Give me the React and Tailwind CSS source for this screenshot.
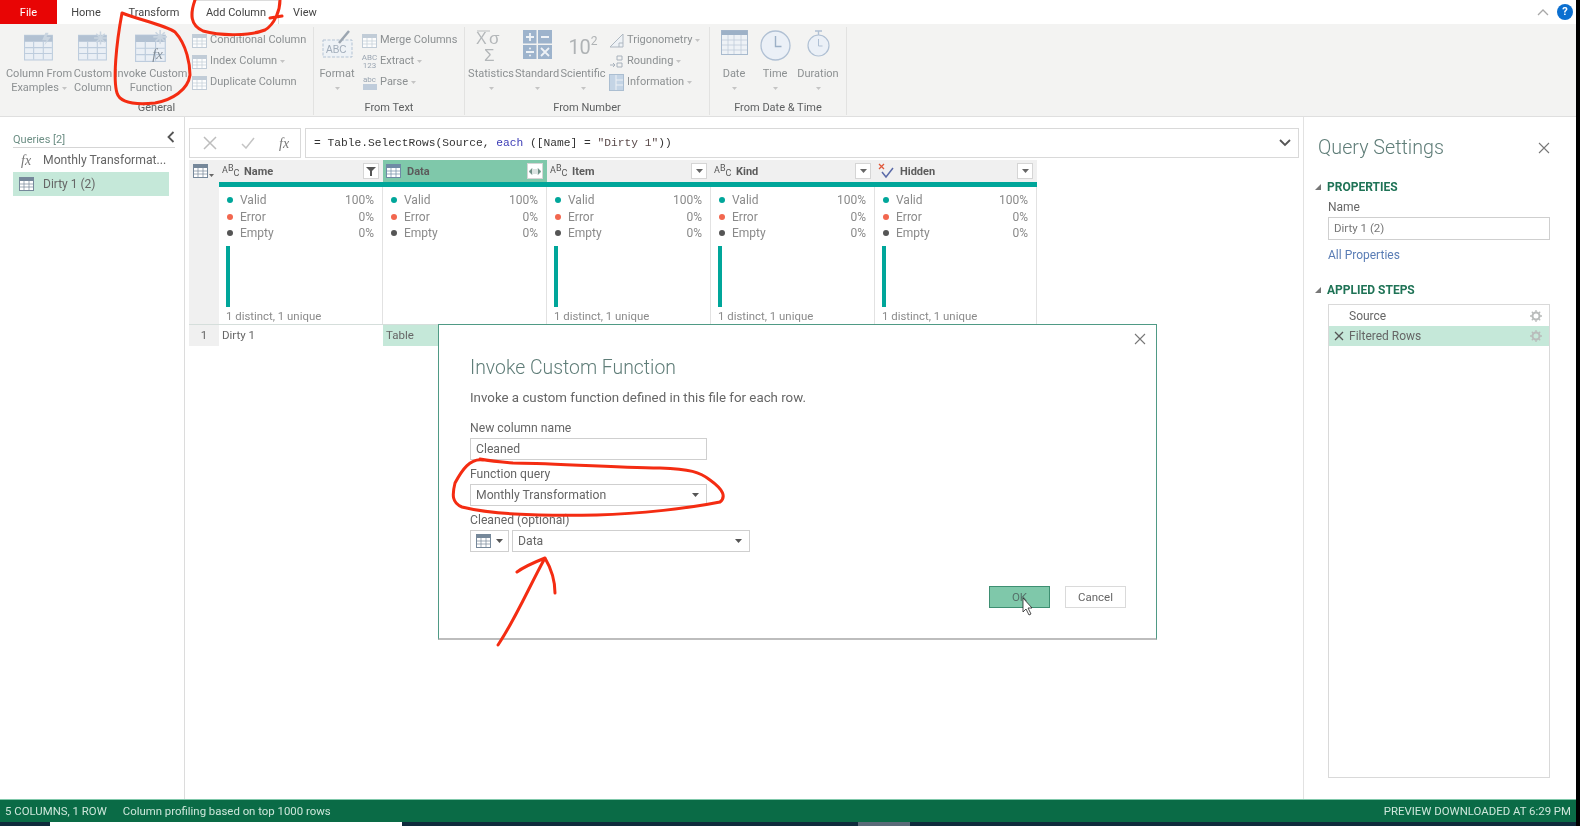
import React from 'react';

const Caret = ({ className = 'text-[#c4c4c4]', w = 7, h = 4 }) => (
  <svg width={w} height={h} viewBox="0 0 7 4" className={className}>
    <path d="M0 0h7L3.5 4z" fill="currentColor" />
  </svg>
);

const TableIcon = ({ w = 28, h = 28, extra }) => (
  <svg width={w} height={h} viewBox="0 0 28 28">
    <rect x="0.5" y="4.5" width="26" height="23" fill="#e9eff6" stroke="#b4c6da" />
    <rect x="0.5" y="4.5" width="26" height="6" fill="#a7b9cd" />
    <path d="M9 10v17M18 10v17M1 16h25M1 21.500h25" stroke="#b4c6da" fill="none" />
    {extra}
  </svg>
);

const TinyTable = ({ color = '#7d93ab' }) => (
  <svg width="15" height="14" viewBox="0 0 15 14">
    <rect x="0.5" y="0.5" width="14" height="13" fill="#fff" stroke={color} />
    <rect x="0.5" y="0.5" width="14" height="3.500" fill={color} />
    <path d="M5 4v9M10 4v9M1 7h13M1 10h13" stroke={color} strokeWidth="0.7" fill="none" />
  </svg>
);

const Burst = ({ x, y }) => (
  <path
    d={`M${x} ${y - 6}v12M${x - 6} ${y}h12M${x - 4} ${y - 4}l8 8M${x + 4} ${y - 4}l-8 8`}
    stroke="#c3d0dd"
    strokeWidth="1.400"
  />
);

const StatsIcon = () => (
  <svg width="30" height="36" viewBox="0 0 30 36">
    <path d="M1 1h13" stroke="#b0b3b5" />
    <text x="0" y="14" fontSize="16" fill="#a9adb0" fontFamily="Liberation Sans">X</text>
    <text x="13" y="14" fontSize="17" fill="#a9adb0" fontFamily="Liberation Sans">σ</text>
    <text x="8" y="31" fontSize="17" fill="#a9adb0" fontFamily="Liberation Sans">Σ</text>
  </svg>
);

const StandardIcon = () => (
  <svg width="29" height="29" viewBox="0 0 29 29">
    <rect width="13.500" height="13.500" fill="#8fa8c6" />
    <rect x="15" width="14" height="13.500" fill="#8fa8c6" />
    <rect y="15" width="13.500" height="14" fill="#8fa8c6" />
    <rect x="15" y="15" width="14" height="14" fill="#8fa8c6" />
    <path d="M3 7h8M7 3v8M18 7h8M3 22h8M18 18l8 8M26 18l-8 8" stroke="#eef2f7" strokeWidth="1.800" />
    <circle cx="7" cy="18.500" r="1" fill="#eef2f7" />
    <circle cx="7" cy="25.500" r="1" fill="#eef2f7" />
  </svg>
);

const ScientificIcon = () => (
  <div className="flex items-start pt-[2px] text-[#a4a8ab] text-[20px] leading-[30px]">
    10<span className="text-[12px] leading-[18px]">2</span>
  </div>
);

const CalendarIcon = () => (
  <svg width="27" height="25" viewBox="0 0 27 25">
    <rect x="0.5" y="0.5" width="26" height="24" fill="#eef2f7" stroke="#9cb1c8" />
    <rect x="0.5" y="0.5" width="26" height="4.500" fill="#8fa6c0" />
    <path d="M7 5v19M13 5v19M20 5v19M1 10h25M1 15h25M1 20h25" stroke="#b7c6d7" strokeWidth="0.800" fill="none" />
  </svg>
);

const ClockIcon = () => (
  <svg width="31" height="31" viewBox="0 0 31 31">
    <circle cx="15.500" cy="15.500" r="14.500" fill="#eaf0f8" stroke="#a5b8cf" strokeWidth="1.300" />
    <path d="M15.500 6v10.500h6" fill="none" stroke="#8ea5c0" strokeWidth="1.400" />
  </svg>
);

const StopwatchIcon = () => (
  <svg width="23" height="27" viewBox="0 0 23 27">
    <path d="M8 1h7M11.500 1v4" stroke="#a5b8cf" strokeWidth="1.400" />
    <circle cx="11.500" cy="15.500" r="10.500" fill="#eaf0f8" stroke="#a5b8cf" strokeWidth="1.200" />
    <path d="M11.500 9v7h4" fill="none" stroke="#a5b8cf" />
  </svg>
);

const FormatIcon = () => (
  <svg width="31" height="29" viewBox="0 0 31 29">
    <rect x="1" y="10" width="29" height="17" fill="#eef2f7" stroke="#a9bbcf" strokeDasharray="3 1.500" />
    <path d="M17 13l10-12" stroke="#8e99a6" strokeWidth="2.500" />
    <text x="4" y="23" fontSize="10" fill="#93a1b1" fontFamily="Liberation Sans">ABC</text>
  </svg>
);

const SmallIcon = ({ kind }) => {
  if (kind === 'abc')
    return (
      <div className="flex flex-col items-center text-[8px] leading-[8px] text-[#8a97a6] w-[15px]">
        <span>ABC</span>
        <span>123</span>
      </div>
    );
  if (kind === 'parse')
    return (
      <div className="flex flex-col items-center text-[8px] leading-[8px] text-[#8a97a6] w-[15px]">
        <span>abc</span>
        <span className="h-[6px] w-[14px] bg-[#b7c6d7]" />
      </div>
    );
  if (kind === 'trig')
    return (
      <svg width="15" height="15" viewBox="0 0 15 15">
        <path d="M1 14L14 1v13z" fill="#eef2f7" stroke="#a3aeb9" />
        <path d="M10 14v-4h4" fill="none" stroke="#a3aeb9" />
      </svg>
    );
  if (kind === 'round')
    return (
      <svg width="15" height="15" viewBox="0 0 15 15">
        <path d="M8 2h5v4H8zM8 9h5v4H8zM1 11h5M4 9l2 2-2 2" fill="none" stroke="#9aa6b3" />
      </svg>
    );
  if (kind === 'info')
    return (
      <svg width="15" height="17" viewBox="0 0 15 17">
        <rect x="0.500" y="0.500" width="14" height="16" fill="#bccfe3" stroke="#9fb5cc" />
        <path d="M7 1v15M7 6h7M7 11h7" stroke="#eef2f7" />
      </svg>
    );
  return <TinyTable color="#b9c6d3" />;
};

const LargeBtn = ({ w, icon, lines, caret }) => (
  <div className={`${w} flex flex-col items-center shrink-0`}>
    <div className="h-[37px] flex justify-center items-start opacity-85">{icon}</div>
    {lines.map((l, i) => (
      <span key={l} className="text-[11px] leading-[14px] text-[#8c9092] whitespace-nowrap flex items-center gap-[3px]">
        {l}
        {caret && i === lines.length - 1 && lines.length > 1 && <Caret w={5} h={3} />}
      </span>
    ))}
    {caret && lines.length === 1 && (
      <span className="h-[14px] flex items-center">
        <Caret w={5} h={3} />
      </span>
    )}
  </div>
);

const SmallBtn = ({ kind, label, caret }) => (
  <div className="h-[21px] flex items-center gap-[3px] whitespace-nowrap">
    <div className="w-[15px] flex justify-center opacity-85">
      <SmallIcon kind={kind} />
    </div>
    <span className="text-[11px] text-[#8c9092]">{label}</span>
    {caret && <Caret w={5} h={3} />}
  </div>
);

const SmallColumn = ({ pl, children }) => <div className={`flex flex-col ${pl}`}>{children}</div>;

const RibbonGroup = ({ w, label, children, pl }) => (
  <div className={`${w} shrink-0 flex flex-col justify-between border-r border-[#e2e2e1] mt-[3px] mb-[1px]`}>
    <div className={`flex pt-[3px] ${pl}`}>{children}</div>
    <div className="text-[11px] leading-[14px] text-[#5d5f60] text-center">{label}</div>
  </div>
);

const Ribbon = () => (
  <div className="h-[93px] flex bg-[#f3f3f2] border-b border-[#dfdfdf] shrink-0">
    <RibbonGroup w="w-[314px]" label="General" pl="pl-[6px]">
      <LargeBtn w="w-[66px]" caret lines={['Column From', 'Examples']} icon={<TableIcon w={30} h={31} extra={<path d="M20 2l-3 7h4l-2 5 6-8h-4l2-4z" fill="#c3d0dd" />} />} />
      <LargeBtn w="w-[42px]" lines={['Custom', 'Column']} icon={<TableIcon w={30} h={31} extra={<Burst x={21} y={7} />} />} />
      <LargeBtn
        w="w-[74px]"
        lines={['Invoke Custom', 'Function']}
        icon={
          <TableIcon
            w={32}
            h={32}
            extra={
              <>
                <Burst x={22} y={6} />
                <text x="15" y="25" fontSize="13" fontStyle="italic" fontFamily="Liberation Serif" fill="#6f7c89">fx</text>
              </>
            }
          />
        }
      />
      <SmallColumn pl="pl-[4px]">
        <SmallBtn kind="table" label="Conditional Column" />
        <SmallBtn kind="table" label="Index Column" caret />
        <SmallBtn kind="table" label="Duplicate Column" />
      </SmallColumn>
    </RibbonGroup>
    <RibbonGroup w="w-[151px]" label="From Text">
      <LargeBtn w="w-[46px]" caret lines={['Format']} icon={<FormatIcon />} />
      <SmallColumn pl="pl-[2px]">
        <SmallBtn kind="table" label="Merge Columns" />
        <SmallBtn kind="abc" label="Extract" caret />
        <SmallBtn kind="parse" label="Parse" caret />
      </SmallColumn>
    </RibbonGroup>
    <RibbonGroup w="w-[245px]" label="From Number" pl="pl-[3px]">
      <LargeBtn w="w-[46px]" caret lines={['Statistics']} icon={<StatsIcon />} />
      <LargeBtn w="w-[46px]" caret lines={['Standard']} icon={<StandardIcon />} />
      <LargeBtn w="w-[46px]" caret lines={['Scientific']} icon={<ScientificIcon />} />
      <SmallColumn pl="pl-[3px]">
        <SmallBtn kind="trig" label="Trigonometry" caret />
        <SmallBtn kind="round" label="Rounding" caret />
        <SmallBtn kind="info" label="Information" caret />
      </SmallColumn>
    </RibbonGroup>
    <RibbonGroup w="w-[137px]" label="From Date & Time" pl="pl-[4px]">
      <LargeBtn w="w-[40px]" caret lines={['Date']} icon={<CalendarIcon />} />
      <LargeBtn w="w-[42px]" caret lines={['Time']} icon={<ClockIcon />} />
      <LargeBtn w="w-[44px]" caret lines={['Duration']} icon={<StopwatchIcon />} />
    </RibbonGroup>
  </div>
);

const TabBar = () => (
  <div className="h-[24px] flex items-stretch shrink-0 bg-white text-[11px] text-[#444]">
    <div className="w-[57px] bg-[#e80505] text-white flex items-center justify-center pt-[2px]">File</div>
    <div className="w-[58px] flex items-center justify-center pt-[2px]">Home</div>
    <div className="w-[78px] flex items-center justify-center pt-[2px]">Transform</div>
    <div className="w-[86px] flex items-center justify-center pt-[2px] border-x border-t border-[#dcdcdc]">Add Column</div>
    <div className="w-[52px] flex items-center justify-center pt-[2px]">View</div>
    <div className="ml-auto flex items-center gap-[8px] pr-[3px]">
      <svg width="12" height="7" viewBox="0 0 12 7">
        <path d="M1 6l5-5 5 5" fill="none" stroke="#a8a8a8" strokeWidth="1.300" />
      </svg>
      <div className="w-[16px] h-[16px] rounded-full bg-[#0b6fd0] text-white text-[11px] font-bold flex items-center justify-center">?</div>
    </div>
  </div>
);

const QueriesPane = () => (
  <div className="w-[185px] shrink-0 border-r border-[#dcdcdc] pl-[13px] pr-[9px] pt-[14px]">
    <div className="flex items-end justify-between h-[17px] border-b border-[#d5d5d5] w-[162px]">
      <span className="text-[11px] leading-[15px] text-[#6d8f85]">Queries [2]</span>
      <svg width="8" height="12" viewBox="0 0 8 12" className="mb-[4px]">
        <path d="M6.500 1L1.500 6l5 5" fill="none" stroke="#555" strokeWidth="1.800" />
      </svg>
    </div>
    <div className="h-[24px] flex items-center text-[12.2px] text-[#666] whitespace-nowrap">
      <span className="w-[30px] pl-[8px] italic text-[14px] text-[#777]" style={{ fontFamily: '"Liberation Serif", serif' }}>fx</span>
      Monthly Transformat...
    </div>
    <div className="h-[24px] w-[156px] bg-[#c5e8d9] flex items-center text-[12px] text-[#666]">
      <span className="w-[30px] pl-[6px]">
        <TinyTable color="#76889a" />
      </span>
      Dirty 1 (2)
    </div>
  </div>
);

const FormulaBar = () => (
  <div className="flex gap-[4px] h-[30px] pr-[4px] shrink-0">
    <div className="w-[112px] border border-[#d9d9d9] flex items-center gap-[24px] pl-[13px]">
      <svg width="14" height="14" viewBox="0 0 14 14">
        <path d="M1 1l12 12M13 1L1 13" stroke="#bdbdbd" strokeWidth="1.500" />
      </svg>
      <svg width="14" height="12" viewBox="0 0 14 12">
        <path d="M1 7l4 4 8-10" fill="none" stroke="#c4c4c4" strokeWidth="1.500" />
      </svg>
      <span className="italic text-[14px] text-[#777]" style={{ fontFamily: '"Liberation Serif", serif' }}>fx</span>
    </div>
    <div className="flex-1 border border-[#d9d9d9] flex items-center pl-[8px] pr-[7px] justify-between">
      <span className="text-[11.25px] text-[#333] whitespace-pre" style={{ fontFamily: '"Liberation Mono", monospace' }}>
        = Table.SelectRows(Source, <span className="text-[#3a3ab5]">each</span> ([Name] = <span className="text-[#5a4a4a]">"Dirty 1"</span>))
      </span>
      <svg width="12" height="8" viewBox="0 0 12 8">
        <path d="M1 1l5 5 5-5" fill="none" stroke="#555" strokeWidth="1.800" />
      </svg>
    </div>
  </div>
);

const TypeIcon = ({ type }) => {
  if (type === 'table') return <TinyTable color="#6f8aa5" />;
  if (type === 'any')
    return (
      <svg width="17" height="16" viewBox="0 0 17 16">
        <path d="M1 1l5 5M6 1L1 6" stroke="#e0583a" strokeWidth="1.300" />
        <path d="M4 9l4 5 7-9" fill="none" stroke="#5a6aa8" strokeWidth="1.500" />
      </svg>
    );
  return (
    <span className="text-[9px] text-[#555] flex leading-[10px] w-[17px]">
      A<span className="-mt-[2px]">B</span><span className="mt-[3px]">C</span>
    </span>
  );
};

const Column = ({ col }) => (
  <div className={`${col.w} shrink-0 flex flex-col`}>
    <div className={`h-[22px] flex items-center justify-between pl-[3px] pr-[4px] ${col.selected ? 'bg-[#7fc8aa]' : 'bg-[#f0f0f0]'}`}>
      <div className={`flex items-center ${col.type === 'table' ? 'gap-[6px]' : 'gap-[5px]'}`}>
        <TypeIcon type={col.type} />
        <span className="text-[11px] font-bold text-[#5c5c5c] pt-[2px]">{col.name}</span>
      </div>
      <div className="w-[16px] h-[16px] bg-white border border-[#d5d5d5] flex items-center justify-center">
        {col.type === 'table' ? (
          <svg width="12" height="7" viewBox="0 0 12 7">
            <path d="M0 3.500l3-3v6zM12 3.500l-3-3v6zM5 1v5M7 1v5" fill="#6f8f85" stroke="#6f8f85" strokeWidth="0.500" />
          </svg>
        ) : col.filtered ? (
          <svg width="10" height="9" viewBox="0 0 10 9">
            <path d="M0 0h10L6 4v5H4V4z" fill="#555" />
          </svg>
        ) : (
          <Caret className="text-[#666]" />
        )}
      </div>
    </div>
    <div className="h-[5px] bg-[#00a69a]" />
    <div className="h-[137px] border-r border-[#e2e2e2] px-[7px] pt-[5px] flex flex-col">
      {[
        ['Valid', '100%', 'bg-[#00a69a]'],
        ['Error', '0%', 'bg-[#f2674f]'],
        ['Empty', '0%', 'bg-[#555]'],
      ].map(([label, pct, dot]) => (
        <div key={label} className="h-[16.5px] flex items-center justify-between pr-[1px] text-[12px] text-[#8a8a8a]">
          <span className="flex items-center gap-[7px] pl-[1px]">
            <span className={`w-[6px] h-[6px] rounded-full ${dot}`} />
            {label}
          </span>
          <span>{pct}</span>
        </div>
      ))}
      {col.type !== 'table' && (
        <>
          <div className="w-[4px] h-[61px] bg-[#00a69a] mt-[4px]" />
          <div className="text-[11.4px] leading-[14px] mt-[2px] text-[#8a8a8a] whitespace-nowrap">1 distinct, 1 unique</div>
        </>
      )}
    </div>
    <div className={`h-[22px] border-t border-[#d5dedb] flex items-center pl-[3px] text-[11.5px] text-[#666] ${col.type === 'table' ? 'bg-[#c5e8d9]' : ''}`}>
      {col.cell}
    </div>
  </div>
);

const columns = [
  { name: 'Name', type: 'text', filtered: true, cell: 'Dirty 1', w: 'w-[164px]' },
  { name: 'Data', type: 'table', selected: true, cell: 'Table', w: 'w-[164px]' },
  { name: 'Item', type: 'text', w: 'w-[164px]' },
  { name: 'Kind', type: 'text', w: 'w-[164px]' },
  { name: 'Hidden', type: 'any', w: 'w-[162px]' },
];

const DataTable = () => (
  <div className="flex mt-[2px] pr-[4px]">
    <div className="w-[30px] shrink-0 flex flex-col bg-[#f0f0f0]">
      <div className="h-[22px] flex items-center pl-[4px] gap-[1px]">
        <TinyTable color="#76889a" />
        <Caret className="text-[#666] mt-[8px]" w={5} h={3} />
      </div>
      <div className="h-[142px]" />
      <div className="h-[22px] border-t border-[#d5dedb] flex items-center justify-center text-[11.5px] text-[#666]">1</div>
    </div>
    {columns.map(col => (
      <Column key={col.name} col={col} />
    ))}
  </div>
);

const Gear = () => (
  <svg width="12" height="12" viewBox="0 0 12 12">
    <circle cx="6" cy="6" r="3.500" fill="none" stroke="#b9bcbb" strokeWidth="2" />
    <path d="M6 0v2M6 10v2M0 6h2M10 6h2M1.800 1.800l1.400 1.400M8.800 8.800l1.400 1.400M10.200 1.800L8.800 3.200M3.200 8.800l-1.400 1.400" stroke="#b9bcbb" strokeWidth="1.300" />
  </svg>
);

const SectionHead = ({ children }) => (
  <div className="flex items-center h-[16px] -ml-[13px] gap-[6px]">
    <svg width="6" height="6" viewBox="0 0 6 6">
      <path d="M6 0v6H0z" fill="#777" />
    </svg>
    <span className="text-[12px] font-bold text-[#1f7356]">{children}</span>
  </div>
);

const SettingsPane = () => (
  <div className="w-[273px] shrink-0 border-l border-[#e2e2e2] pl-[24px] pr-[26px] flex flex-col pt-[15px] pb-[21px]">
    <div className="flex items-center justify-between -ml-[10px] h-[32px]">
      <span className="text-[19.7px] font-light text-[#5f7d78]">Query Settings</span>
      <svg width="12" height="12" viewBox="0 0 12 12">
        <path d="M1 1l10 10M11 1L1 11" stroke="#777" strokeWidth="1.100" />
      </svg>
    </div>
    <div className="mt-[15px]">
      <SectionHead>PROPERTIES</SectionHead>
    </div>
    <div className="text-[12px] leading-[16px] text-[#666] mt-[4px]">Name</div>
    <div className="h-[23px] mt-[2px] border border-[#cfcfcf] flex items-center pl-[5px] text-[11.5px] text-[#777]">Dirty 1 (2)</div>
    <div className="text-[12px] leading-[16px] text-[#5a7db5] mt-[7px]">All Properties</div>
    <div className="mt-[19px]">
      <SectionHead>APPLIED STEPS</SectionHead>
    </div>
    <div className="flex-1 mt-[6px] border border-[#d9d9d9] flex flex-col">
      <div className="h-[21px] flex items-center justify-between pl-[20px] pr-[7px] text-[12px] text-[#666]">
        Source
        <Gear />
      </div>
      <div className="h-[20px] flex items-center justify-between pl-[5px] pr-[7px] bg-[#c5e8d9] text-[12px] text-[#666]">
        <span className="flex items-center gap-[5px]">
          <svg width="10" height="10" viewBox="0 0 10 10">
            <path d="M1 1l8 8M9 1L1 9" stroke="#555" strokeWidth="1.300" />
          </svg>
          Filtered Rows
        </span>
        <Gear />
      </div>
    </div>
  </div>
);

const SelectBox = ({ w, label }) => (
  <div className={`${w} h-[22px] border border-[#cfcfcf] flex items-center justify-between pl-[5px] pr-[7px] text-[12.2px] text-[#666]`}>
    {label}
    <Caret className="text-[#555]" />
  </div>
);

const Label = ({ children, mt }) => <div className={`${mt} h-[16px] text-[12.2px] leading-[16px] text-[#666]`}>{children}</div>;

// dialog floats over the table
const InvokeDialog = () => (
  <div className="absolute left-[438px] top-[324px] w-[719px] h-[316px] bg-white border border-[#4f9a85] border-b-[#bdbdbd] border-b-2 pl-[31px] pr-[30px] pt-[28px] z-10">
    <svg width="12" height="12" viewBox="0 0 12 12" className="absolute right-[10px] top-[8px]">
      <path d="M1 1l10 10M11 1L1 11" stroke="#777" strokeWidth="1.100" />
    </svg>
    <div className="h-[30px] text-[19.4px] leading-[30px] font-light text-[#5f7d78]">Invoke Custom Function</div>
    <div className="mt-[6px] h-[18px] text-[13.3px] leading-[18px] text-[#666]">Invoke a custom function defined in this file for each row.</div>
    <Label mt="mt-[13px]">New column name</Label>
    <div className="mt-[2px] w-[237px] h-[22px] border border-[#cfcfcf] flex items-center pl-[5px] text-[12.2px] text-[#666]">Cleaned</div>
    <Label mt="mt-[6px]">Function query</Label>
    <div className="mt-[2px]">
      <SelectBox w="w-[237px]" label="Monthly Transformation" />
    </div>
    <Label mt="mt-[6px]">Cleaned (optional)</Label>
    <div className="mt-[2px] flex gap-[3px]">
      <div className="w-[39px] h-[22px] border border-[#cfcfcf] flex items-center justify-center gap-[5px]">
        <TinyTable color="#76889a" />
        <Caret className="text-[#555]" />
      </div>
      <SelectBox w="w-[238px]" label="Data" />
    </div>
    <div className="mt-[34px] flex justify-end gap-[15px]">
      <div className="w-[61px] h-[22px] bg-[#7fc8aa] border border-[#3e8f72] flex items-center justify-center pt-[1px] text-[11.5px] text-[#55716a]">OK</div>
      <div className="w-[61px] h-[22px] border border-[#dadada] flex items-center justify-center pt-[1px] text-[11.5px] text-[#666]">Cancel</div>
    </div>
  </div>
);

// hand drawn marks and mouse pointer, free canvas on top of everything
const Annotations = () => (
  <svg className="absolute inset-0 z-20 pointer-events-none" width="1580" height="826" viewBox="0 0 1580 826">
    <g fill="none" stroke="#f42c12" strokeWidth="3" strokeLinecap="round" strokeLinejoin="round">
      <path d="M122 13C140 20 165 25 175 32C187 45 190 65 190 75C188 90 172 100 155 103C135 105 120 103 117 93C113 80 116 45 122 13" />
      <path d="M195 0C190 14 190 25 203 31C220 36 250 36 265 30C275 24 280 10 280 0M270 18L282 16" />
      <path d="M483 460C470 458 462 470 455 483C452 495 452 503 462 507C490 514 530 516 597 515C640 514 690 508 720 502C726 497 724 490 710 480C700 472 690 469 660 468C610 467 540 463 513 463C500 462 490 461 480 459" />
      <path d="M498 645C515 620 530 585 545 558M517 572C525 566 535 562 545 558C552 570 555 580 555 593" />
    </g>
    <path d="M1023 598v14l3-3 3 6 2-1-3-6h4z" fill="#fff" stroke="#222" strokeWidth="0.800" />
  </svg>
);

const StatusBar = () => (
  <div className="h-[23px] shrink-0 bg-[#0a6b46] border-t border-[#7fc8aa] flex items-center justify-between pt-[1px] px-[5px] text-[11.4px] text-[#cde6da]">
    <div className="flex gap-[16px]">
      <span>5 COLUMNS, 1 ROW</span>
      <span>Column profiling based on top 1000 rows</span>
    </div>
    <span>PREVIEW DOWNLOADED AT 6:29 PM</span>
  </div>
);

const Taskbar = () => (
  <div className="h-[4px] shrink-0 bg-[#0f2b3c] flex">
    <div className="ml-[50px] w-[352px] bg-white" />
    <div className="ml-[456px] w-[52px] bg-[#5a6a78]" />
  </div>
);

const App = () => (
  <div className="relative w-[1580px] h-[826px] overflow-hidden bg-black flex blur-[0.5px]" style={{ fontFamily: 'Roboto, "Noto Sans", sans-serif' }}>
    <div className="w-[1576px] h-full bg-white flex flex-col">
      <TabBar />
      <Ribbon />
      <div className="flex-1 flex min-h-0">
        <QueriesPane />
        <div className="flex-1 min-w-0 pl-[4px] pt-[11px]">
          <FormulaBar />
          <DataTable />
        </div>
        <SettingsPane />
      </div>
      <StatusBar />
      <Taskbar />
    </div>
    <InvokeDialog />
    <Annotations />
  </div>
);

export default App;
